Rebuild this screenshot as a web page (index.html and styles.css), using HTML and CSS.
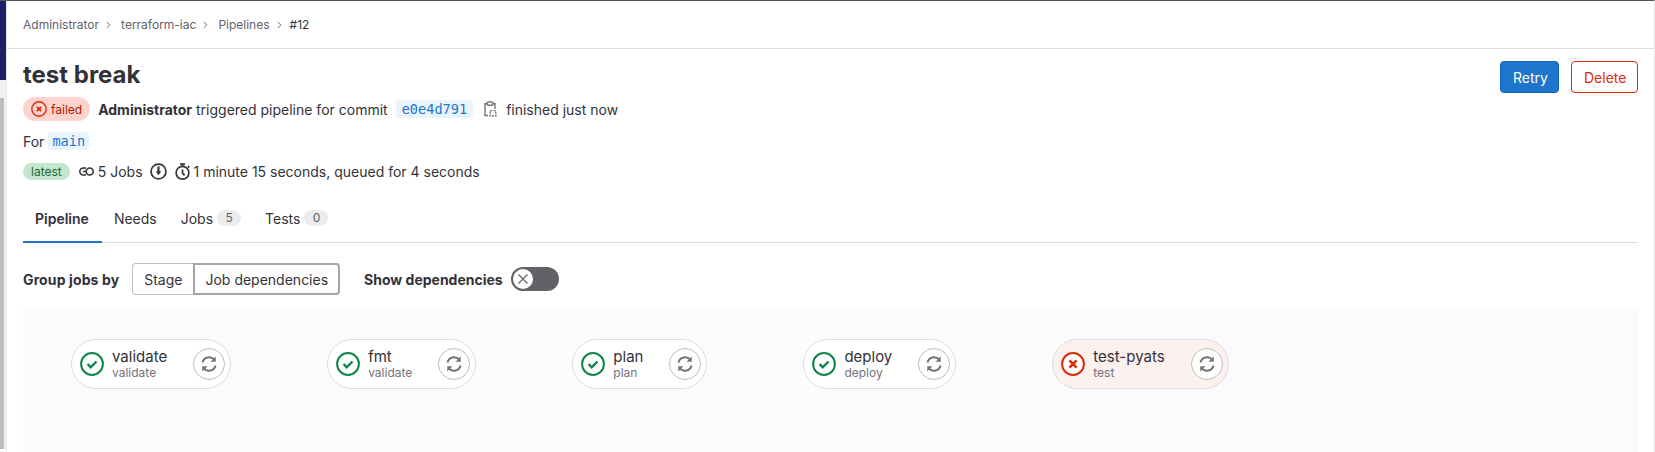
FILE: index.html
```html
<!DOCTYPE html>
<html lang="en">
<head>
<meta charset="utf-8">
<title>Pipeline #12</title>
<link rel="stylesheet" href="styles.css">
</head>
<body>
<svg class="sprite" width="0" height="0" aria-hidden="true">
  <symbol id="retry" viewBox="0 0 16 16">
    <path d="M2.2 6.6A6 6 0 0 1 12.6 4.1" fill="none" stroke="currentColor" stroke-width="1.8"/>
    <path d="M14 1.4V6H9.4z" fill="currentColor"/>
    <path d="M13.8 9.4A6 6 0 0 1 3.4 11.9" fill="none" stroke="currentColor" stroke-width="1.8"/>
    <path d="M2 14.6V10h4.6z" fill="currentColor"/>
  </symbol>
  <symbol id="ok" viewBox="0 0 24 24">
    <circle cx="12" cy="12" r="10.9" fill="#fff" stroke="#108548" stroke-width="2"/>
    <path d="M7.6 12.2l3.1 3.1 5.8-5.8" fill="none" stroke="#108548" stroke-width="2.4"/>
  </symbol>
  <symbol id="bad" viewBox="0 0 24 24">
    <circle cx="12" cy="12" r="10.9" fill="#fff" stroke="#dd2b0e" stroke-width="2"/>
    <path d="M8.4 8.4l7.2 7.2M15.6 8.4l-7.2 7.2" fill="none" stroke="#dd2b0e" stroke-width="2.6"/>
  </symbol>
</svg>
<div class="app">
  <div class="rail">
    <div class="rail-nav"></div>
    <div class="rail-gap"></div>
    <div class="rail-scroll"></div>
  </div>
  <div class="page">
    <nav class="crumbs">
      <span>Administrator</span><i class="sep"></i>
      <span>terraform-iac</span><i class="sep"></i>
      <span>Pipelines</span><i class="sep"></i>
      <span class="here">#12</span>
    </nav>
    <header class="head">
      <div class="info">
        <h1 class="title">test break</h1>
        <div class="line line-status">
          <span class="status">
            <svg class="status-icon" viewBox="0 0 16 16"><circle cx="8" cy="8" r="7.2" fill="none" stroke="#dd2b0e" stroke-width="1.4"/><path d="M5.8 5.8l4.4 4.4M10.2 5.8l-4.4 4.4" fill="none" stroke="#dd2b0e" stroke-width="1.9"/></svg>
            failed
          </span>
          <span class="who"><b>Administrator</b> triggered pipeline for commit</span>
          <code class="chip sha">e0e4d791</code>
          <svg class="clip" viewBox="0 0 16 16"><path d="M5 2.8H3v11.7h3M11 2.8h2v5" fill="none" stroke="#737278" stroke-width="1.4"/><rect x="5.2" y="1" width="5.6" height="3.2" rx="1" fill="#fff" stroke="#737278" stroke-width="1.4"/><rect x="8.2" y="9.6" width="5.6" height="5.4" fill="none" stroke="#737278" stroke-width="1.4" stroke-dasharray="2 1.2"/></svg>
          <span>finished just now</span>
        </div>
        <div class="line line-for">For <code class="chip">main</code></div>
        <div class="line line-meta">
          <span class="latest">latest</span>
          <svg class="meta-link" viewBox="0 0 16 16"><path d="M7.5 4.700H5a3.300 3.300 0 0 0 0 6.600h2.500M4.800 8h3" fill="none" stroke="#333238" stroke-width="1.5"/><circle cx="11" cy="8" r="3.300" fill="none" stroke="#333238" stroke-width="1.5"/></svg>
          <span class="jobs">5 Jobs</span>
          <svg class="meta-icon" viewBox="0 0 16 16"><circle cx="8" cy="8" r="7" fill="none" stroke="#333238" stroke-width="1.6"/><path d="M8 3.200v5.400" stroke="#333238" stroke-width="2"/><path d="M5.400 7.800h5.200L8 11.600z" fill="#333238"/></svg>
          <svg class="meta-icon" viewBox="0 0 16 16"><circle cx="8" cy="9.200" r="6" fill="none" stroke="#333238" stroke-width="1.6"/><path d="M5.600 1h4.800M8 1v2.400M8 6v3.600l2 2M13 3l1.400 1.400" fill="none" stroke="#333238" stroke-width="1.6"/></svg>
          <span class="duration">1 minute 15 seconds, queued for 4 seconds</span>
        </div>
      </div>
      <div class="actions">
        <button class="btn btn-retry">Retry</button>
        <button class="btn btn-delete">Delete</button>
      </div>
    </header>
    <div class="tabs">
      <a class="tab tab-active">Pipeline</a>
      <a class="tab">Needs</a>
      <a class="tab">Jobs <span class="count">5</span></a>
      <a class="tab">Tests <span class="count">0</span></a>
    </div>
    <div class="controls">
      <b class="label label-group">Group jobs by</b>
      <div class="seg">
        <span class="seg-item">Stage</span>
        <span class="seg-item seg-on">Job dependencies</span>
      </div>
      <b class="label label-dep">Show dependencies</b>
      <span class="toggle"><span class="knob"><svg viewBox="0 0 16 16"><path d="M3.500 3.500l9 9M12.500 3.500l-9 9" stroke="#737278" stroke-width="1.5"/></svg></span></span>
    </div>
    <section class="graph">
      <div class="job"><svg class="job-status"><use href="#ok"/></svg><div class="job-text"><span class="job-name">validate</span><span class="job-stage">validate</span></div><span class="job-retry"><svg><use href="#retry"/></svg></span></div>
      <div class="job"><svg class="job-status"><use href="#ok"/></svg><div class="job-text"><span class="job-name">fmt</span><span class="job-stage">validate</span></div><span class="job-retry"><svg><use href="#retry"/></svg></span></div>
      <div class="job"><svg class="job-status"><use href="#ok"/></svg><div class="job-text"><span class="job-name">plan</span><span class="job-stage">plan</span></div><span class="job-retry"><svg><use href="#retry"/></svg></span></div>
      <div class="job"><svg class="job-status"><use href="#ok"/></svg><div class="job-text"><span class="job-name">deploy</span><span class="job-stage">deploy</span></div><span class="job-retry"><svg><use href="#retry"/></svg></span></div>
      <div class="job job-failed"><svg class="job-status"><use href="#bad"/></svg><div class="job-text"><span class="job-name">test-pyats</span><span class="job-stage">test</span></div><span class="job-retry"><svg><use href="#retry"/></svg></span></div>
    </section>
  </div>
</div>
</body>
</html>
```
FILE: styles.css
```css
* { box-sizing: border-box; }
html, body { margin: 0; height: 100%; overflow: hidden; background: #fff; }
body { font-family: Inter, "Noto Sans", sans-serif; font-size: 14px; color: #333238; }
.sprite { display: block; width: 0; height: 0; }
.app { display: flex; height: 452px; border-top: 1px solid #55555a; border-right: 1px solid #e6e6e6; }
.rail { width: 7px; flex: none; display: flex; flex-direction: column; border-right: 1px solid #e8e8ee; }
.rail-nav { height: 79px; background: #1f1e66; }
.rail-gap { height: 18px; background: #f0f0f0; }
.rail-scroll { height: 351px; border-right: 2px solid #f0f0f0; background: #bdbdbd; }
.page { flex: 1; min-width: 0; display: flex; flex-direction: column; }

.crumbs { height: 48px; padding-left: 16px; display: flex; align-items: center; border-bottom: 1px solid #dcdcde; font-size: 12px; color: #626168; }
.sep { width: 6px; height: 6px; margin: 0 11px 0 5px; border-top: 1px solid #89888d; border-right: 1px solid #89888d; transform: rotate(45deg) scale(.8); }
.here { margin-left: -2px; color: #333238; }

.head { display: flex; justify-content: space-between; padding: 12px 16px 0; height: 145px; }
.title { margin: -1px 0 1px; font-size: 24px; line-height: 30px; font-weight: 700; }
.line { display: flex; align-items: center; }
.line-status { margin-top: 7px; height: 24px; }
.status { display: inline-flex; align-items: center; gap: 4px; height: 24px; padding: 0 8px; border-radius: 12px; background: #fdd4cd; color: #ae1800; font-size: 12px; }
.status-icon { width: 16px; height: 16px; }
.who { margin-left: 8px; }
.who b { font-weight: 700; }
.chip { display: inline-block; padding: 0 4px; border-radius: 4px; background: #e9f3fc; color: #1f75cb; font-family: "DejaVu Sans Mono", "Liberation Mono", monospace; font-size: 13.600px; line-height: 18px; }
.sha { margin-left: 8px; padding: 0 6px; }
.clip { width: 16px; height: 16px; margin: 0 8px 0 9px; }
.line-for { margin-top: 8px; height: 24px; gap: 4px; }
.line-meta { margin-top: 9px; height: 18px; }
.latest { display: inline-flex; align-items: center; height: 17px; padding: 0 8px; border-radius: 9px; background: #c3e6cd; color: #24663b; font-size: 12px; }
.meta-link { width: 17px; height: 17px; margin-left: 8px; }
.jobs { margin-left: 3px; }
.meta-icon { width: 17px; height: 17px; margin-left: 7px; }
.duration { margin-left: 3px; }

.actions { display: flex; gap: 12px; align-items: flex-start; }
.btn { height: 32px; border-radius: 4px; font: 14px Inter, "Noto Sans", sans-serif; background: #fff; padding: 0 12px; }
.btn-retry { width: 59px; border: 1px solid #1068bf; background: #1f75cb; color: #fff; }
.btn-delete { width: 67px; border: 1px solid #dd2b0e; color: #dd2b0e; }

.tabs { display: flex; height: 49px; margin: 0 16px; align-items: stretch; border-bottom: 1px solid #dcdcde; }
.tab { display: flex; align-items: center; gap: 4px; padding: 0 12px; }
.tab-active { font-weight: 600; box-shadow: inset 0 -2px 0 #1f75cb; margin-bottom: -1px; padding-right: 13px; }
.count { display: inline-block; min-width: 24px; padding: 0 7px; border-radius: 8px; background: #ececef; color: #626168; font-size: 12px; line-height: 16px; text-align: center; }

.controls { display: flex; align-items: center; height: 64px; padding-top: 8px; margin: 0 16px; }
.label { font-weight: 700; }
.label-group { letter-spacing: .12px; }
.seg { display: flex; margin-left: 13px; height: 32px; border-radius: 4px; }
.seg-item { display: flex; align-items: center; padding: 0 11px; border: 1px solid #bfbfc3; }
.seg-item:first-child { border-radius: 4px 0 0 4px; border-right: 0; }
.seg-on { padding: 0 10px; border: 2px solid #a4a3a8; border-radius: 0 4px 4px 0; }
.label-dep { margin-left: 24px; }
.toggle { display: flex; align-items: center; width: 48px; height: 24px; margin-left: 8px; padding-left: 2px; border-radius: 12px; background: #626168; }
.knob { display: flex; align-items: center; justify-content: center; width: 20px; height: 20px; border-radius: 50%; background: #fff; }
.knob svg { width: 16px; height: 16px; }

.graph { flex: 1; margin: 0 16px; padding: 32px 48px; display: flex; align-items: flex-start; gap: 96px; background: #fbfbfd; }
.job { display: flex; align-items: center; height: 50px; padding: 0 5px 0 8px; border: 1px solid #dcdcde; border-radius: 25px; background: #fff; }
.job-failed { background: #fcf1ef; }
.job-status { width: 24px; height: 24px; flex: none; }
.job-text { display: flex; flex-direction: column; margin: 0 26px 0 8px; }
.job-name { font-size: 15px; line-height: 17px; color: #333238; }
.job-stage { font-size: 12px; line-height: 15px; color: #737278; }
.job-retry { display: flex; align-items: center; justify-content: center; width: 32px; height: 32px; margin-left: auto; border: 1px solid #bfbfc3; border-radius: 50%; background: #fff; color: #737278; flex: none; }
.job-retry svg { width: 18px; height: 18px; }
```
